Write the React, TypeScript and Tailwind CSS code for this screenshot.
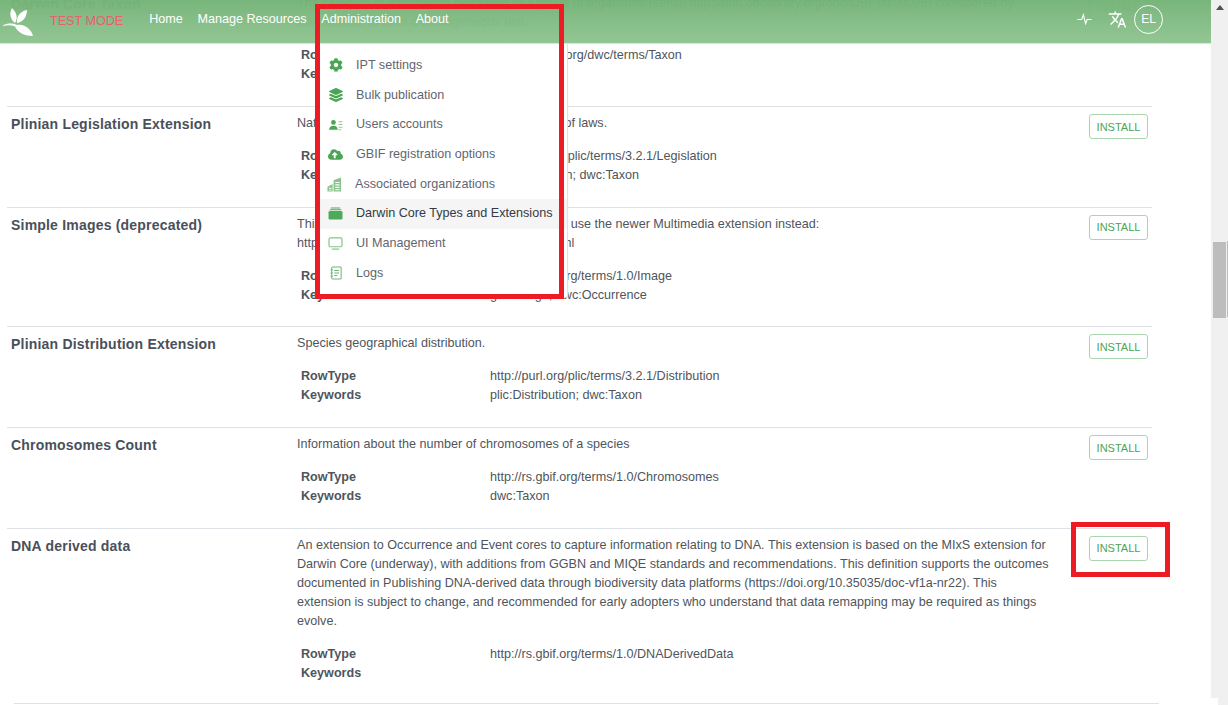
import type { ReactNode } from 'react'
import { FaCloudUploadAlt, FaCog, FaLayerGroup } from 'react-icons/fa'
import { MdTranslate } from 'react-icons/md'

type Extension = {
  title: string
  description: string[]
  rowType: string
  keywords: string
}

const extensions: Extension[] = [
  {
    title: 'Darwin Core Taxon',
    description: [
      'The category of information pertaining to a group of organisms (sensu http://purl.obolibrary.org/obo/OBI_0100026) considered by',
      'taxonomists to form a homogeneous unit.',
    ],
    rowType: 'http://rs.tdwg.org/dwc/terms/Taxon',
    keywords: '',
  },
  {
    title: 'Plinian Legislation Extension',
    description: ['National and international legislation, by means of laws.'],
    rowType: 'http://purl.org/plic/terms/3.2.1/Legislation',
    keywords: 'plic:Legislation; dwc:Taxon',
  },
  {
    title: 'Simple Images (deprecated)',
    description: [
      'This extension has just been deprecated, please use the newer Multimedia extension instead:',
      'http://rs.gbif.org/extension/gbif/1.0/multimedia.xml',
    ],
    rowType: 'http://rs.gbif.org/terms/1.0/Image',
    keywords: 'gbif:Image; dwc:Occurrence',
  },
  {
    title: 'Plinian Distribution Extension',
    description: ['Species geographical distribution.'],
    rowType: 'http://purl.org/plic/terms/3.2.1/Distribution',
    keywords: 'plic:Distribution; dwc:Taxon',
  },
  {
    title: 'Chromosomes Count',
    description: ['Information about the number of chromosomes of a species'],
    rowType: 'http://rs.gbif.org/terms/1.0/Chromosomes',
    keywords: 'dwc:Taxon',
  },
  {
    title: 'DNA derived data',
    description: [
      'An extension to Occurrence and Event cores to capture information relating to DNA. This extension is based on the MIxS extension for',
      'Darwin Core (underway), with additions from GGBN and MIQE standards and recommendations. This definition supports the outcomes',
      'documented in Publishing DNA-derived data through biodiversity data platforms (https://doi.org/10.35035/doc-vf1a-nr22). This',
      'extension is subject to change, and recommended for early adopters who understand that data remapping may be required as things',
      'evolve.',
    ],
    rowType: 'http://rs.gbif.org/terms/1.0/DNADerivedData',
    keywords: '',
  },
]

function UsersIcon() {
  return (
    <svg viewBox="0 0 16 14" className="h-[12px] w-[14px] fill-[#4ba654]">
      <circle cx="5" cy="4" r="2.8" />
      <path d="M0 12.500c0-3.200 2-4.600 5-4.600s5 1.400 5 4.600z" />
      <path d="M11 2.500h4.500v1.200H11zM11 5.700h4.500v1.200H11zM11 8.900h4.500v1.200H11zM11 12h3v1h-3z" className="fill-[#8cc892]" />
    </svg>
  )
}

function BuildingIcon() {
  return (
    <svg viewBox="0 0 16 16" className="h-[15px] w-[15px] fill-[#86c48c]">
      <path
        fillRule="evenodd"
        d="M7 3.500L15 .5V15.500H7zM8.800 5.200v1.200h4.600V5.200zM8.800 7.800V9h4.600V7.800zM8.800 10.400v1.200h4.600v-1.200zM8.800 13v1.200h4.600V13z"
      />
      <path fillRule="evenodd" d="M.5 10.500L6 7.500v8H.5zM2 11.500v1h2.800v-1zM2 13.500v1h2.800v-1z" />
    </svg>
  )
}

function TrayIcon() {
  return (
    <svg viewBox="0 0 16 14" className="h-[13px] w-[15px] fill-[#4fa958]">
      <path d="M3 .6h10v1H3zM1.800 2.400h12.400v1H1.800z" />
      <rect x="0.500" y="4.200" width="15" height="9.300" rx="1.500" />
    </svg>
  )
}

function MonitorIcon() {
  return (
    <svg viewBox="0 0 16 14" className="h-[13px] w-[15px] fill-none stroke-[#86c48c]">
      <rect x="1" y="1" width="14" height="9.500" rx="1.500" strokeWidth="1.300" />
      <path d="M4 13h8" strokeWidth="1.300" />
    </svg>
  )
}

function NotebookIcon() {
  return (
    <svg viewBox="0 0 14 16" className="h-[14px] w-[12px] fill-none stroke-[#6fb877]" strokeWidth="1.200">
      <rect x="2" y="1" width="11" height="14" rx="1" />
      <path d="M5 5h5.500M5 8h5.500M5 11h3.500M0.500 4.500h3M0.500 8h3M0.500 11.500h3" />
    </svg>
  )
}

function ActivityIcon() {
  return (
    <svg viewBox="0 0 16 12" className="h-[12px] w-[15px] fill-none stroke-white" strokeWidth="1.200">
      <path d="M0.500 6.500H5l1.800-5 2.400 9.500 1.600-4.500h4.700" />
    </svg>
  )
}

function LeafLogo() {
  return (
    <svg viewBox="0 0 30 28" className="h-[28px] w-[30px] fill-white">
      <path d="M9 0C6 5 7 11 12 15c3-5 2-10-3-15z" />
      <path d="M24 2c-6 1-11 6-10 13 6-1 10-6 10-13z" />
      <path d="M0 17.500c4-2.500 10-2.500 14-.5 6-1.500 14 3 16 11-8 0-15-3-18-9.500-4-1.500-8-1.500-12-.5z" />
    </svg>
  )
}

const menuItems: { label: string; icon: ReactNode; active?: boolean; shifted?: boolean }[] = [
  { label: 'IPT settings', icon: <FaCog className="h-[14px] w-[14px] text-[#4ba654]" /> },
  { label: 'Bulk publication', icon: <FaLayerGroup className="h-[14px] w-[14px] text-[#4ba654]" /> },
  { label: 'Users accounts', icon: <UsersIcon /> },
  { label: 'GBIF registration options', icon: <FaCloudUploadAlt className="h-[15px] w-[15px] text-[#4ba654]" /> },
  { label: 'Associated organizations', icon: <BuildingIcon />, shifted: true },
  { label: 'Darwin Core Types and Extensions', icon: <TrayIcon />, active: true },
  { label: 'UI Management', icon: <MonitorIcon /> },
  { label: 'Logs', icon: <NotebookIcon /> },
]

function ExtensionRow({ extension }: { extension: Extension }) {
  return (
    <div className="grid grid-cols-[286px_1fr_63px] border-t border-[#dee2e6] pt-[7px] pb-[21.7px] pl-1 pr-1 leading-[19px]">
      <h3 className="pt-[1px] text-[14px] font-bold leading-[19px] tracking-[0.2px] text-[#4a505a]">
        {extension.title}
      </h3>
      <div>
        {extension.description.map((line) => (
          <p key={line} className="whitespace-nowrap">
            {line}
          </p>
        ))}
        <dl className="mt-[14px] grid grid-cols-[189px_1fr] pl-1">
          <dt className="font-bold">RowType</dt>
          <dd>{extension.rowType}</dd>
          <dt className="font-bold">Keywords</dt>
          <dd className="min-h-[19px]">{extension.keywords}</dd>
        </dl>
      </div>
      <div className="flex justify-end">
        <button className="h-[25px] w-[59px] rounded-[3px] border border-[#a9d6ad] pt-[1px] text-[11px] text-[#4ba654]">
          INSTALL
        </button>
      </div>
    </div>
  )
}

export default function App() {
  return (
    <div className="relative h-[705px] w-[1228px] overflow-hidden bg-[#f0f0f0] font-['Liberation_Sans',Arial,sans-serif] text-[12.6px] text-[#4f555c]">
      <div className="flex h-[698px]">
        <main className="h-full w-[1211px] overflow-hidden bg-white pl-[7px] pr-[59px]">
          <div className="-mt-[13.7px]">
            {extensions.map((extension) => (
              <ExtensionRow key={extension.title} extension={extension} />
            ))}
          </div>
        </main>
        <div className="flex w-[17px]">
          <div className="ml-[2px] flex w-[13px] flex-col items-center">
            <svg viewBox="0 0 8 5" className="mt-[5px] h-[5px] w-[8px] fill-[#505050]">
              <path d="M4 0l4 5H0z" />
            </svg>
            <div className="mt-[232px] h-[76px] w-[13px] bg-[#bdbdbd]" />
          </div>
          <div className="ml-[1px] mt-[241px] h-[76px] w-[1px] bg-[#bdbdbd]" />
        </div>
      </div>
      <div className="h-[7px] w-[1218px] bg-white pl-[14px] pr-[59px]">
        <div className="h-[6px] border-b border-[#dee2e6]" />
      </div>

      <header className="absolute inset-x-0 top-0 flex h-[44px] w-[1211px] items-center border-b border-[#d8e8d8] bg-gradient-to-b from-[#74b377]/[0.97] to-[#90c491]/[0.97] pb-[5px] text-white">
        <div className="ml-[3px] mt-[5px]">
          <LeafLogo />
        </div>
        <span className="ml-[17px] mt-[4px] text-[#e8606f]">TEST MODE</span>
        <nav className="ml-[26px] flex gap-[14.6px]">
          <span>Home</span>
          <span>Manage Resources</span>
          <span>Administration</span>
          <span>About</span>
        </nav>
        <div className="ml-auto mr-[48px] flex items-center">
          <ActivityIcon />
          <MdTranslate className="ml-[16px] h-[19px] w-[19px]" />
          <span className="ml-[7px] flex h-[29px] w-[29px] items-center justify-center rounded-full border-[1.5px] border-white text-[12px]">
            EL
          </span>
        </div>
      </header>

      <div className="absolute left-[315px] top-[43px] h-[255px] w-[253px] rounded-b-[3px] border border-[#e2e2e2] bg-white pt-[6.5px] shadow-[0_1px_2px_rgba(0,0,0,0.05)]">
        {menuItems.map((item) => (
          <div
            key={item.label}
            className={`flex h-[29.7px] items-center pl-[12px] ${item.active ? 'bg-[#f5f5f5] text-[#343a40]' : 'text-[#5f6670]'}`}
          >
            <span className={`flex w-[15px] justify-center ${item.shifted ? '-ml-px' : ''}`}>{item.icon}</span>
            <span className="ml-[13px]">{item.label}</span>
          </div>
        ))}
      </div>

      {/* red marks drawn over the screenshot */}
      <div className="pointer-events-none absolute left-[315px] top-[4px] h-[295px] w-[249px] border-[5px] border-[#ed1c24]" />
      <div className="pointer-events-none absolute left-[1071px] top-[522px] h-[55px] w-[99px] border-[5px] border-[#ed1c24]" />
    </div>
  )
}
